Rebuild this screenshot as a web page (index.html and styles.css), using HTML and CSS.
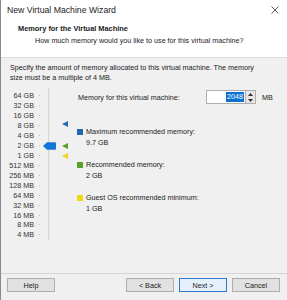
FILE: index.html
```html
<!DOCTYPE html>
<html lang="en">
<head>
  <meta charset="UTF-8">
  <title>New Virtual Machine Wizard</title>
  <link rel="stylesheet" href="styles.css">
</head>
<body>
  <div class="window">
    <div class="top">
      <div class="titlebar">
        <span class="title">New Virtual Machine Wizard</span>
        <svg class="close" width="8" height="8" viewBox="0 0 8 8"><path d="M0.5 0.5 L7.5 7.5 M7.5 0.5 L0.5 7.5" stroke="#333" stroke-width="0.8"/></svg>
      </div>
      <div class="head">
        <div class="head-title">Memory for the Virtual Machine</div>
        <div class="head-sub">How much memory would you like to use for this virtual machine?</div>
      </div>
    </div>

    <div class="content">
      <p class="intro">Specify the amount of memory allocated to this virtual machine. The memory size must be a multiple of 4 MB.</p>

      <div class="main">
        <div class="scale">
          <div class="row"><span>64 GB</span><i></i></div>
          <div class="row"><span>32 GB</span><i></i></div>
          <div class="row"><span>16 GB</span><i></i></div>
          <div class="row"><span>8 GB</span><i></i></div>
          <div class="row"><span>4 GB</span><i></i></div>
          <div class="row"><span>2 GB</span><i></i></div>
          <div class="row"><span>1 GB</span><i></i></div>
          <div class="row"><span>512 MB</span><i></i></div>
          <div class="row"><span>256 MB</span><i></i></div>
          <div class="row"><span>128 MB</span><i></i></div>
          <div class="row"><span>64 MB</span><i></i></div>
          <div class="row"><span>32 MB</span><i></i></div>
          <div class="row"><span>16 MB</span><i></i></div>
          <div class="row"><span>8 MB</span><i></i></div>
          <div class="row"><span>4 MB</span><i></i></div>
        </div>

        <div class="slider">
          <div class="track"></div>
          <svg class="thumb" width="13" height="8" viewBox="0 0 13 8"><path d="M0 4 L4 0.3 L12 0.3 Q13 0.3 13 1.3 L13 6.7 Q13 7.7 12 7.7 L4 7.7 Z" fill="#1275d8"/></svg>
          <svg class="mark mark-max" width="6" height="6" viewBox="0 0 6 6"><path d="M0 3 L6 0 L6 6 Z" fill="#2a6cad"/></svg>
          <svg class="mark mark-rec" width="6" height="6" viewBox="0 0 6 6"><path d="M0 3 L6 0 L6 6 Z" fill="#5c9e2c"/></svg>
          <svg class="mark mark-min" width="6" height="6" viewBox="0 0 6 6"><path d="M0 3 L6 0 L6 6 Z" fill="#f0d31a"/></svg>
        </div>

        <div class="info">
          <div class="mem-row">
            <span class="mem-label">Memory for this virtual machine:</span>
            <div class="spin">
              <div class="spin-box"><span class="sel">2048</span></div>
              <div class="spin-btns">
                <svg width="5" height="3" viewBox="0 0 5 3"><path d="M0 3 L2.5 0 L5 3 Z" fill="#333"/></svg>
                <svg width="5" height="3" viewBox="0 0 5 3"><path d="M0 0 L2.5 3 L5 0 Z" fill="#333"/></svg>
              </div>
            </div>
            <span class="unit">MB</span>
          </div>

          <div class="group">
            <div class="group-label"><span class="sq sq-max"></span>Maximum recommended memory:</div>
            <div class="group-value">9.7 GB</div>
          </div>
          <div class="group">
            <div class="group-label"><span class="sq sq-rec"></span>Recommended memory:</div>
            <div class="group-value">2 GB</div>
          </div>
          <div class="group">
            <div class="group-label"><span class="sq sq-min"></span>Guest OS recommended minimum:</div>
            <div class="group-value">1 GB</div>
          </div>
        </div>
      </div>
    </div>

    <div class="footer">
      <button class="btn">Help</button>
      <div class="footer-right">
        <button class="btn">&lt; Back</button>
        <button class="btn btn-default">Next &gt;</button>
        <button class="btn">Cancel</button>
      </div>
    </div>
  </div>
</body>
</html>
```

FILE: styles.css
```css
body { margin: 0; font-family: "Liberation Sans", Arial, sans-serif; font-size: 7.2px; color: #1a1a1a; background: #f0f0f0; }
.window { width: 287px; height: 300px; box-sizing: border-box; border-left: 1px solid #8a8a8a; background: #f0f0f0; display: flex; flex-direction: column; }

.top { background: #fff; height: 57px; border-bottom: 1px solid #dadada; }
.titlebar { height: 20px; display: flex; align-items: center; justify-content: space-between; padding: 0 8px 0 6px; }
.title { font-size: 8.7px; color: #222; }
.close { display: block; }
.head { padding-left: 17px; }
.head-title { font-weight: bold; font-size: 7.4px; line-height: 13px; margin-top: 2px; }
.head-sub { padding-left: 17px; line-height: 12px; }

.content { flex: 1; padding: 5px 0 0 9px; }
.intro { margin: 0; line-height: 10px; width: 256px; }

.main { display: flex; margin-top: 5px; }
.scale { width: 40px; padding-top: 3px; margin-left: -9px; }
.row { height: 9.93px; display: flex; align-items: center; }
.row span { width: 33px; text-align: right; color: #333; }
.row i { display: block; width: 1px; height: 1px; background: #c4c4c4; margin-left: 5px; }

.slider { position: relative; width: 36px; height: 152px; }
.track { width: 1px; height: 100%; margin-left: 7px; background: #d6d6d6; border-right: 1px solid #ececec; }
.thumb { position: absolute; left: 2px; top: 54px; }
.mark { position: absolute; left: 21px; }
.mark-max { top: 33px; }
.mark-rec { top: 55px; }
.mark-min { top: 65px; }

.info { padding-top: 2px; width: 196px; }
.mem-row { display: flex; align-items: center; height: 14px; margin-bottom: 22px; }
.mem-label { width: 128px; padding-left: 1px; }
.spin { display: flex; height: 14px; }
.spin-box { width: 37px; height: 12px; background: #fff; border: 1px solid #adadad; border-right: 0; display: flex; justify-content: flex-end; align-items: center; padding-right: 1px; }
.sel { background: #0c6fd3; color: #fff; line-height: 10px; padding: 0 1px; }
.spin-btns { width: 9px; height: 12px; border: 1px solid #adadad; background: #e6e6e6; display: flex; flex-direction: column; align-items: center; justify-content: space-around; }
.spin-btns svg { display: block; }
.unit { margin-left: 6px; }

.group { margin-top: 11px; line-height: 11px; }
.group-label { display: flex; align-items: center; }
.group-value { padding-left: 9px; }
.sq { width: 6px; height: 6px; margin-right: 3px; }
.sq-max { background: #1f68b0; }
.sq-rec { background: #5a9e2b; }
.sq-min { background: #f3d614; }

.footer { height: 22px; border-top: 1px solid #d5d5d5; display: flex; justify-content: space-between; align-items: flex-start; padding: 4px 7px 0 6px; }
.footer-right { display: flex; gap: 5px; }
.btn { width: 48px; height: 14px; padding: 0; font-family: inherit; font-size: 7.2px; color: #1a1a1a; background: #e1e1e1; border: 1px solid #adadad; }
.btn-default { border-color: #2b7ad0; background: #e5f0fa; }
```
